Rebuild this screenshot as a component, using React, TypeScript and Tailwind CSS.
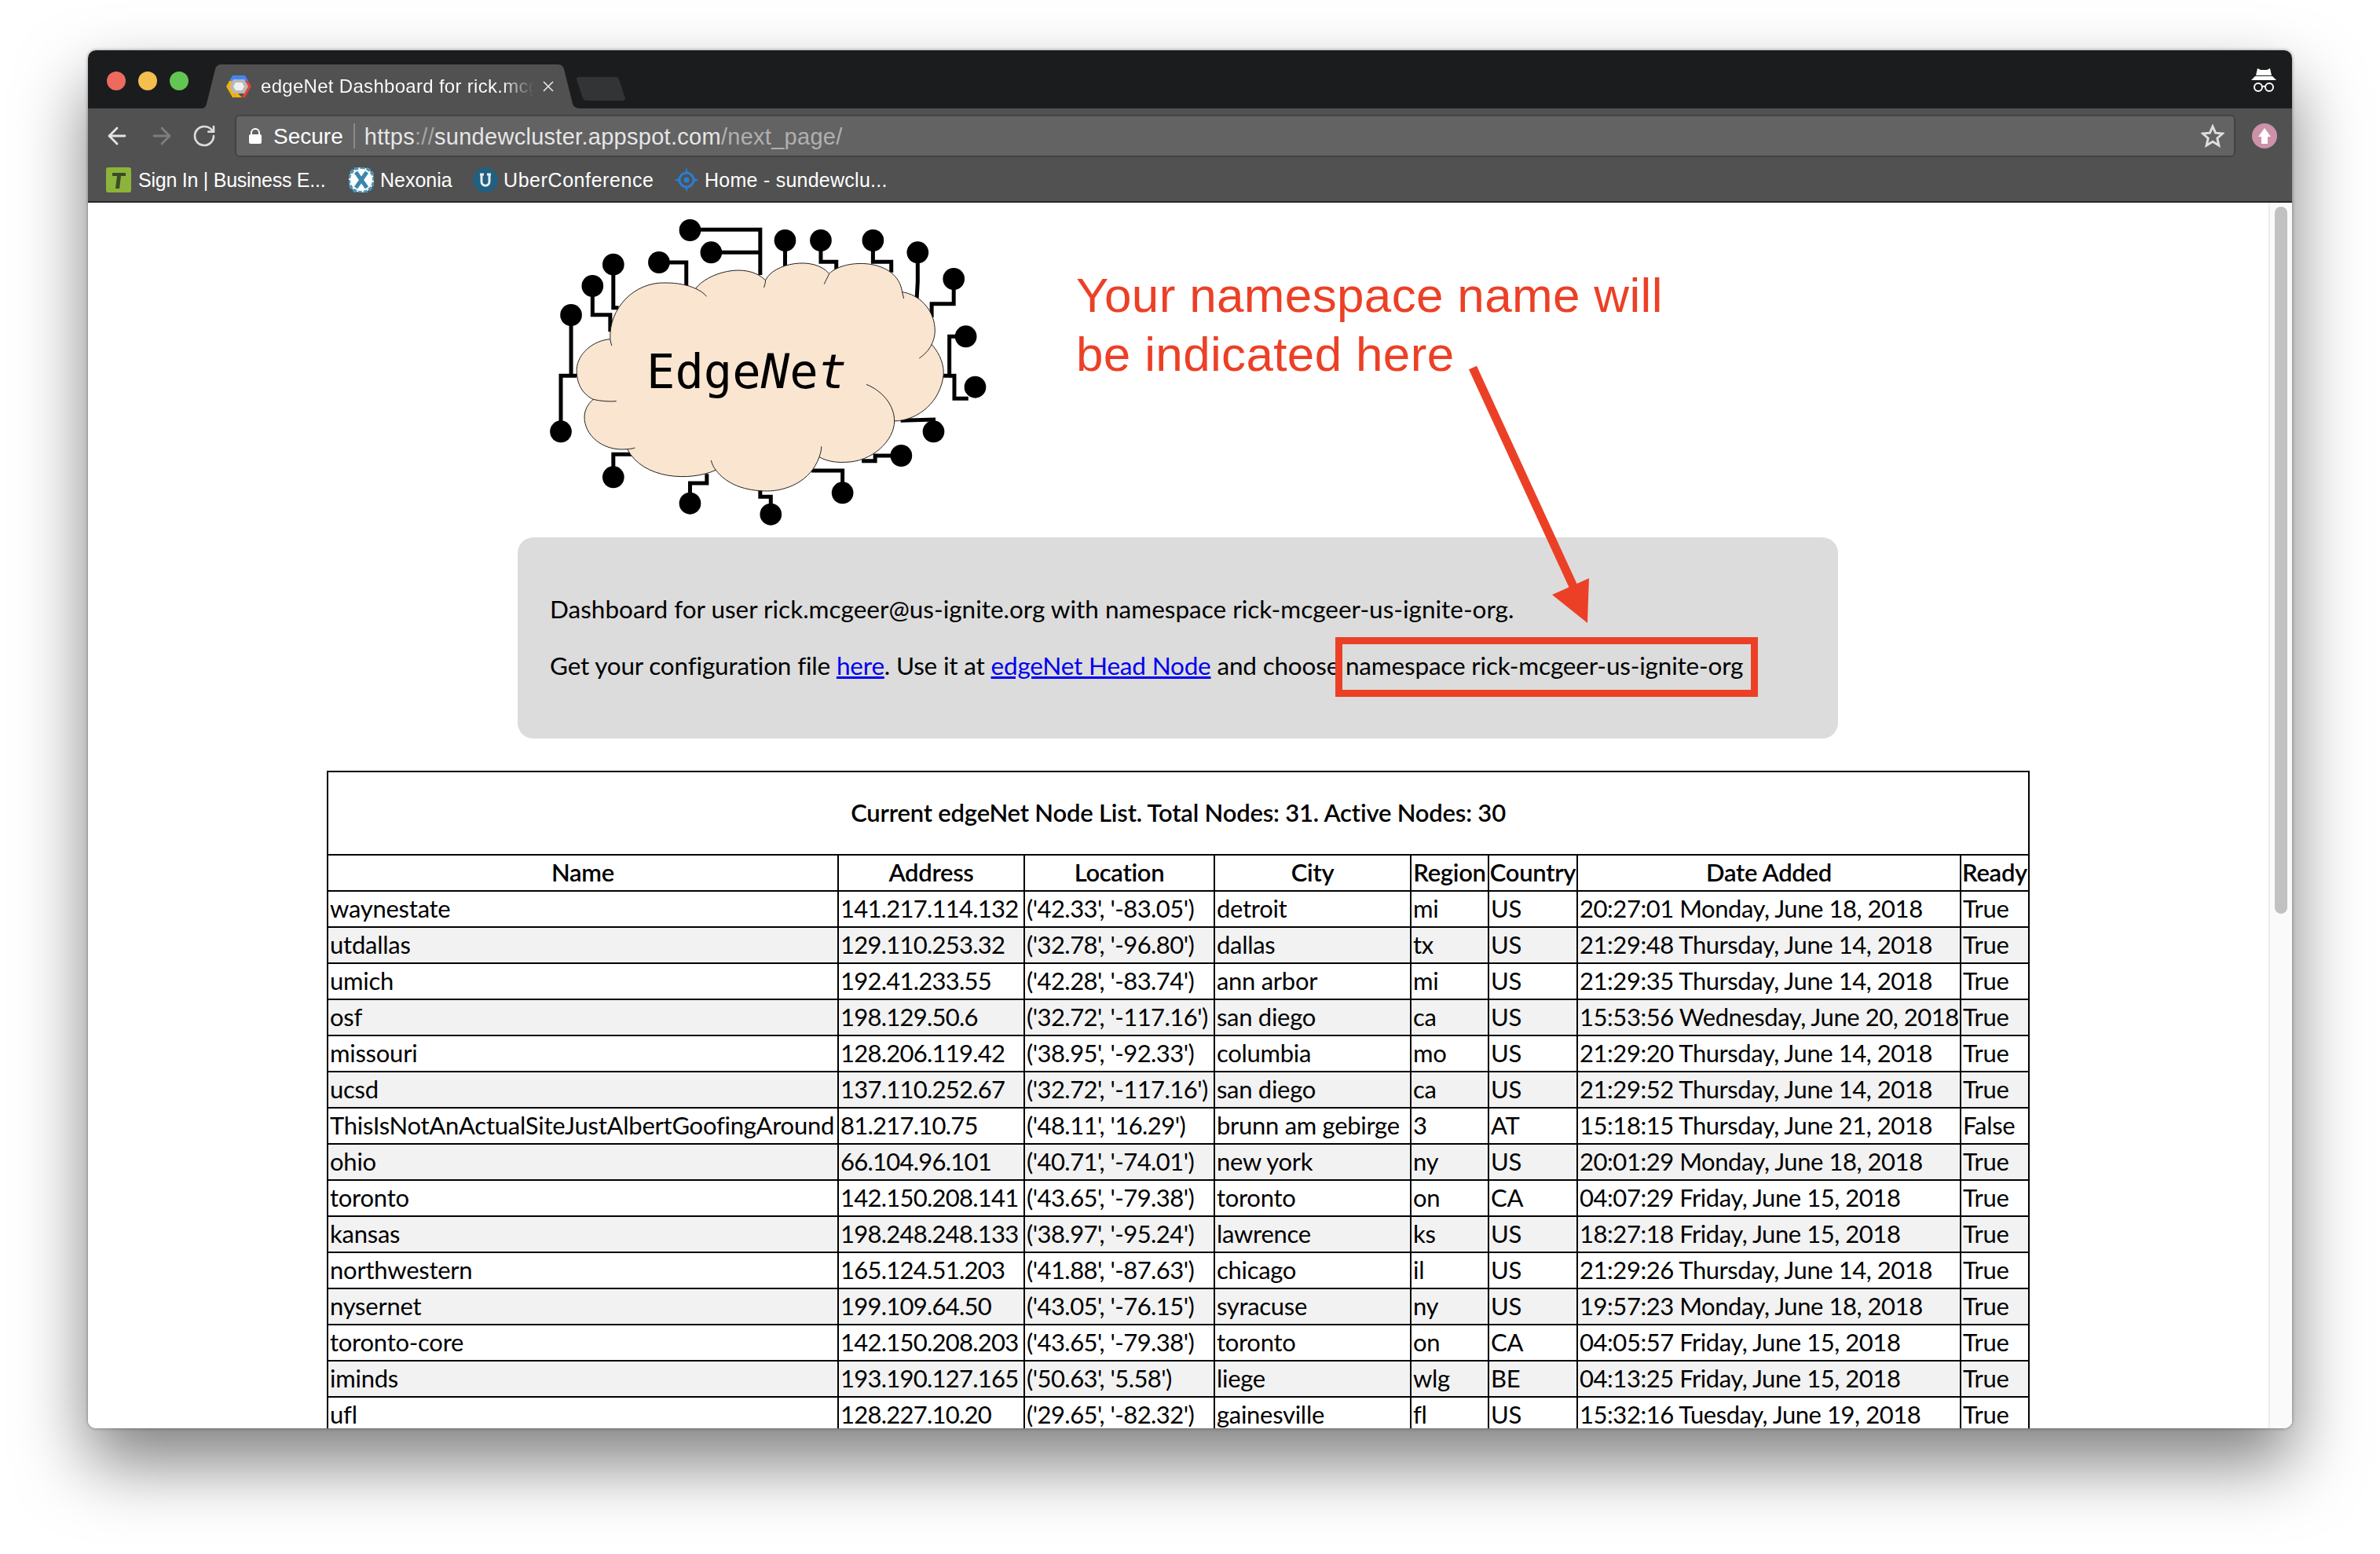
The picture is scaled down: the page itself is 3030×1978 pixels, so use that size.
import { ArrowLeft, ArrowRight, RotateCw } from "lucide-react";

const rows = [
  ["waynestate", "141.217.114.132", "('42.33', '-83.05')", "detroit", "mi", "US", "20:27:01 Monday, June 18, 2018", "True"],
  ["utdallas", "129.110.253.32", "('32.78', '-96.80')", "dallas", "tx", "US", "21:29:48 Thursday, June 14, 2018", "True"],
  ["umich", "192.41.233.55", "('42.28', '-83.74')", "ann arbor", "mi", "US", "21:29:35 Thursday, June 14, 2018", "True"],
  ["osf", "198.129.50.6", "('32.72', '-117.16')", "san diego", "ca", "US", "15:53:56 Wednesday, June 20, 2018", "True"],
  ["missouri", "128.206.119.42", "('38.95', '-92.33')", "columbia", "mo", "US", "21:29:20 Thursday, June 14, 2018", "True"],
  ["ucsd", "137.110.252.67", "('32.72', '-117.16')", "san diego", "ca", "US", "21:29:52 Thursday, June 14, 2018", "True"],
  ["ThisIsNotAnActualSiteJustAlbertGoofingAround", "81.217.10.75", "('48.11', '16.29')", "brunn am gebirge", "3", "AT", "15:18:15 Thursday, June 21, 2018", "False"],
  ["ohio", "66.104.96.101", "('40.71', '-74.01')", "new york", "ny", "US", "20:01:29 Monday, June 18, 2018", "True"],
  ["toronto", "142.150.208.141", "('43.65', '-79.38')", "toronto", "on", "CA", "04:07:29 Friday, June 15, 2018", "True"],
  ["kansas", "198.248.248.133", "('38.97', '-95.24')", "lawrence", "ks", "US", "18:27:18 Friday, June 15, 2018", "True"],
  ["northwestern", "165.124.51.203", "('41.88', '-87.63')", "chicago", "il", "US", "21:29:26 Thursday, June 14, 2018", "True"],
  ["nysernet", "199.109.64.50", "('43.05', '-76.15')", "syracuse", "ny", "US", "19:57:23 Monday, June 18, 2018", "True"],
  ["toronto-core", "142.150.208.203", "('43.65', '-79.38')", "toronto", "on", "CA", "04:05:57 Friday, June 15, 2018", "True"],
  ["iminds", "193.190.127.165", "('50.63', '5.58')", "liege", "wlg", "BE", "04:13:25 Friday, June 15, 2018", "True"],
  ["ufl", "128.227.10.20", "('29.65', '-82.32')", "gainesville", "fl", "US", "15:32:16 Tuesday, June 19, 2018", "True"],
];

const headers = ["Name", "Address", "Location", "City", "Region", "Country", "Date Added", "Ready"];

const nodes = [
  [502, 99], [570, 184], [808, 138], [923, 138], [1091, 138], [1235, 184], [1351, 285], [1390, 505], [1420, 698], [1286, 868],
  [1182, 960], [993, 1102], [762, 1184], [502, 1142], [255, 1042], [86, 868], [119, 423], [188, 312], [255, 230], [402, 222],
];

const wires = [
  "502,97 728,97 728,270",
  "570,184 728,184",
  "808,138 808,240 865,240",
  "923,138 923,220 973,220 973,265",
  "1091,138 1091,220 1150,220 1150,260",
  "1235,184 1235,295 1232,360",
  "1351,285 1351,380 1280,380 1280,432",
  "1390,505 1337,505 1337,655 1318,655",
  "1337,655 1353,655 1353,742 1398,742",
  "1286,868 1286,822 1180,826",
  "1182,960 1098,960 1098,980 1055,980",
  "993,1102 993,1017 893,1017",
  "762,1184 762,1117 728,1117 728,1090",
  "502,1142 502,1065 556,1065 556,1030",
  "255,1042 255,955 325,955",
  "86,868 86,655 137,655",
  "119,423 119,655",
  "188,312 188,422 245,422 245,487",
  "255,230 255,395 272,395",
  "402,222 490,222 490,320",
];

const Logo = () => (
  <div className="relative ml-[568px] mt-[2px] h-[424px] w-[620px]">
    <svg viewBox="0 0 1568 1272" preserveAspectRatio="none" className="h-full w-full">
      {wires.map((w) => (
        <polyline key={w} points={w} fill="none" stroke="#000" strokeWidth={5} vectorEffect="non-scaling-stroke" />
      ))}
      {nodes.map(([cx, cy]) => (
        <ellipse key={`${cx}-${cy}`} cx={cx} cy={cy} rx={35} ry={42} fill="#000" />
      ))}
      <path
        d="M245 515 C240 400 320 295 425 300 C460 300 495 308 520 322 C555 265 680 215 745 290 C770 225 900 195 950 265 C1000 205 1170 205 1185 335 C1240 345 1285 400 1290 470 C1292 495 1288 515 1280 535 C1310 575 1320 620 1318 650 C1310 750 1240 825 1160 828 C1160 900 1090 985 1000 985 C970 987 940 980 918 965 C890 1060 810 1095 750 1095 C680 1095 620 1070 585 1015 C500 1060 350 1050 300 935 C220 945 160 880 162 810 C163 785 172 765 190 745 C150 720 137 680 137 630 C140 570 190 520 245 515 Z"
        fill="#fae5d1"
        stroke="#222"
        strokeWidth={1}
        vectorEffect="non-scaling-stroke"
      />
      <path
        d="M520 322 C535 330 548 340 555 352 M745 290 C745 300 742 310 740 318 M950 265 C945 280 938 292 934 305 M1185 335 C1187 345 1189 352 1190 360 M1280 535 C1270 560 1255 575 1240 588 M1070 688 C1125 715 1160 770 1160 828 M918 965 C922 950 925 940 925 925 M585 1015 C578 1005 572 990 570 978 M300 935 C310 935 318 932 325 930 M190 745 C215 752 240 754 265 752 M245 515 C246 525 248 532 250 540"
        fill="none"
        stroke="#222"
        strokeWidth={1}
        vectorEffect="non-scaling-stroke"
      />
    </svg>
    <div className="absolute left-[143px] top-[178px] font-['DejaVu_Sans_Mono',monospace] text-[60.5px] leading-[70px] text-black">
      Edge<span className="italic">N</span>e<span className="italic">t</span>
    </div>
  </div>
);

const Favicon = () => (
  <svg viewBox="0 0 32 28" className="h-[28px] w-[32px]">
    <path d="M8 0H24L28 7H4Z" fill="#4285f4" />
    <path d="M28 7L32 14L24 28H20L26 14L24 8Z" fill="#db4437" />
    <path d="M0 14L4 7H8L6 14L12 28H8Z" fill="#f4b400" />
    <path d="M6 14L12 28H20L14 22Z" fill="#f4b400" />
    <path d="M9 5H23L28 14L23 23H9L4 14Z" fill="#b8b8b8" />
    <path d="M12 9H20L23 14L20 19H12L9 14Z" fill="#f0f0f0" />
  </svg>
);

const Incognito = () => (
  <svg viewBox="0 0 32 30" className="h-[30px] w-[32px]">
    <path d="M8 0L12 2H20L24 0L26 9H6Z" fill="#fff" />
    <path d="M0 15L5 10H27L32 15Z" fill="#fff" />
    <circle cx="9" cy="24" r="5" fill="none" stroke="#fff" strokeWidth="2" />
    <circle cx="23" cy="24" r="5" fill="none" stroke="#fff" strokeWidth="2" />
    <path d="M13 23H19" stroke="#fff" strokeWidth="2" />
  </svg>
);

const Toolbar = () => (
  <div className="flex h-[120px] flex-col border-b-2 border-[#262626] bg-[#515151] font-['Liberation_Sans',sans-serif]">
    <div className="flex h-[62px] items-center pt-[8px]">
      <ArrowLeft size={34} strokeWidth={2} color="#e4e4e4" className="ml-[20px]" />
      <ArrowRight size={34} strokeWidth={2} color="#7e7e7e" className="ml-[23px]" />
      <RotateCw size={32} strokeWidth={2} color="#dcdcdc" className="ml-[21px]" />
      <div className="ml-[23px] flex h-[54px] w-[2547px] items-center rounded-[6px] border-2 border-[#434343] bg-[#636363]">
        <svg viewBox="0 0 16 20" className="ml-[16px] h-[20px] w-[16px]">
          <path d="M3 9V6a5 5 0 0 1 10 0v3" fill="none" stroke="#fff" strokeWidth="2" />
          <rect x="0" y="8" width="16" height="12" rx="2" fill="#fff" />
        </svg>
        <span className="ml-[15px] pt-[2px] text-[28px] leading-[34px] text-white">Secure</span>
        <span className="ml-[13px] h-[32px] w-[2px] bg-[#8a8a8a]" />
        <span className="ml-[12px] pt-[2px] text-[29px] leading-[34px] tracking-[0.28px] text-[#e6e6e6]">
          https<span className="text-[#a6a6a6]">://</span>sundewcluster.appspot.com<span className="text-[#b0b0b0]">/next_page/</span>
        </span>
        <svg viewBox="0 0 30 30" className="ml-auto mr-[12px] h-[30px] w-[30px]">
          <path d="M15 3L18.6 11.2 27.5 12 20.8 18 22.8 27 15 22.3 7.2 27 9.2 18 2.5 12 11.4 11.2Z" fill="none" stroke="#dedede" strokeWidth="3" />
        </svg>
      </div>
      <div className="ml-[21px] flex h-[32px] w-[32px] items-center justify-center rounded-full bg-[#cc92aa]">
        <svg viewBox="0 0 16 20" className="h-[20px] w-[16px]">
          <path d="M8 0L16 11H12V20H4V11H0Z" fill="#fff" />
        </svg>
      </div>
    </div>
    <div className="flex flex-1 items-center pl-[23px] pt-[2px] text-[25px] leading-[30px] text-white">
      <svg viewBox="0 0 32 32" className="h-[32px] w-[32px]">
        <rect width="32" height="32" rx="3" fill="#8cb43a" />
        <path d="M8 7H25V11H19L17 27H12L14 11H8Z" fill="#3b4a2a" />
      </svg>
      <span className="ml-[9px] w-[240px] tracking-[-0.25px]">Sign In | Business E...</span>
      <svg viewBox="0 0 32 32" className="ml-[28px] h-[32px] w-[32px]">
        <circle cx="16" cy="16" r="16" fill="#fff" />
        <path d="M16 0A16 16 0 0 1 32 16A16 16 0 0 1 16 32A16 16 0 0 1 0 16A16 16 0 0 1 16 0Z" fill="none" stroke="#4d95b8" strokeWidth="4" strokeDasharray="5 2" />
        <path d="M9 6L23 26M23 6L9 26" stroke="#3a87ad" strokeWidth="5" />
      </svg>
      <span className="ml-[8px] w-[92px]">Nexonia</span>
      <svg viewBox="0 0 32 32" className="ml-[26px] h-[32px] w-[32px]">
        <circle cx="16" cy="16" r="16" fill="#22607f" />
        <path d="M9 9H14M18 9H23M11 9V18C11 25 21 25 21 18V9" fill="none" stroke="#e8eef2" strokeWidth="3" />
      </svg>
      <span className="ml-[7px] w-[192px] tracking-[0.58px]">UberConference</span>
      <svg viewBox="0 0 32 32" className="ml-[25px] h-[32px] w-[32px]">
        <path d="M16 0L18 7H14ZM0 16L6 14V18ZM32 16L26 14V18ZM16 32L14 25H18Z" fill="#2a7ed2" />
        <circle cx="16" cy="16" r="9" fill="none" stroke="#2a7ed2" strokeWidth="3" />
        <circle cx="16" cy="16" r="3.5" fill="#2a7ed2" />
      </svg>
      <span className="ml-[7px] tracking-[0.25px]">Home - sundewclu...</span>
    </div>
  </div>
);

const TitleBar = () => (
  <div className="flex h-[74px] items-start bg-[#1b1c1e] font-['Liberation_Sans',sans-serif]">
    <div className="ml-[24px] mt-[27px] flex gap-[16px]">
      <span className="h-[24px] w-[24px] rounded-full bg-[#ee6a5f]" />
      <span className="h-[24px] w-[24px] rounded-full bg-[#f5bf4f]" />
      <span className="h-[24px] w-[24px] rounded-full bg-[#62c554]" />
    </div>
    <div className="relative ml-[16px] mt-[18px] h-[56px] w-[484px]">
      <svg viewBox="0 0 484 56" className="absolute inset-0 h-full w-full">
        <path d="M0 56C4 56 6 54 7 50L18 6C19 2 22 0 26 0H454C458 0 461 2 462 6L473 50C474 54 478 56 484 56Z" fill="#515151" />
      </svg>
      <div className="relative flex h-[42px] items-center pl-[32px] pt-[14px]">
        <Favicon />
        <span className="ml-[12px] w-[348px] overflow-hidden whitespace-nowrap bg-[linear-gradient(90deg,#fff_88%,transparent_100%)] bg-clip-text text-[24px] leading-[30px] tracking-[0.3px] text-transparent">
          edgeNet Dashboard for rick.mcgeer@us-ignite.org
        </span>
        <svg viewBox="0 0 14 14" className="ml-[11px] h-[14px] w-[14px]">
          <path d="M1 1L13 13M13 1L1 13" stroke="#e8e8e8" strokeWidth="1.6" />
        </svg>
      </div>
    </div>
    <svg viewBox="0 0 63 30" className="ml-[-6px] mt-[34px] h-[30px] w-[63px]">
      <path d="M2 0H50C52 0 53 1 54 3L62 27C62 29 61 30 59 30H12C10 30 9 29 8 27L0 3C0 1 1 0 2 0Z" fill="#333436" />
    </svg>
    <div className="ml-auto mr-[20px] mt-[23px]">
      <Incognito />
    </div>
  </div>
);

const Annotations = () => (
  <>
    <div className="absolute left-[1258px] top-[80px] font-['Liberation_Sans',sans-serif] text-[62px] leading-[75px] tracking-[0.34px] text-[#ec4026]">
      Your namespace name will
      <br />
      be indicated here
    </div>
    <svg viewBox="0 0 200 360" className="absolute left-[1752px] top-[204px] h-[360px] w-[200px]">
      <path d="M11 6L143 293" stroke="#ec4026" strokeWidth="11" fill="none" />
      <path d="M159 274L112 295 157 331Z" fill="#ec4026" />
    </svg>
    <div className="absolute left-[1588px] top-[553px] h-[76px] w-[538px] border-[9px] border-[#ec4026]" />
  </>
);

const columnTracking = [
  "tracking-[-0.25px]",
  "tracking-[-0.75px]",
  "tracking-[-0.55px]",
  "tracking-[-0.3px]",
  "tracking-[-0.3px]",
  "tracking-[-0.3px]",
  "tracking-[-0.45px]",
  "tracking-[-0.3px]",
];

const NodeTable = () => (
  <table className="ml-[304px] mt-[41px] w-[2166px] table-fixed border-collapse border-2 border-black text-[31px] leading-[38px] text-black">
    <colgroup>
      <col className="w-[650px]" />
      <col className="w-[237px]" />
      <col className="w-[242px]" />
      <col className="w-[250px]" />
      <col className="w-[99px]" />
      <col className="w-[113px]" />
      <col className="w-[488px]" />
      <col className="w-[87px]" />
    </colgroup>
    <thead>
      <tr>
        <th colSpan={8} className="h-[106px] border-2 border-black px-[2px] pb-[2px] text-center font-semibold tracking-[-0.2px]">
          Current edgeNet Node List. Total Nodes: 31. Active Nodes: 30
        </th>
      </tr>
      <tr>
        {headers.map((h) => (
          <th key={h} className="h-[46px] border-2 border-black p-0 pb-[2px] text-center font-semibold tracking-[-0.3px] whitespace-nowrap">
            {h}
          </th>
        ))}
      </tr>
    </thead>
    <tbody>
      {rows.map((row, i) => (
        <tr key={row[0]} className={i % 2 === 1 ? "bg-[#f2f2f2]" : "bg-white"}>
          {row.map((cell, j) => (
            <td key={j} className={`h-[46px] border-2 border-black pb-[2px] pl-[2px] pr-0 pt-0 whitespace-nowrap ${columnTracking[j]}`}>
              {cell}
            </td>
          ))}
        </tr>
      ))}
    </tbody>
  </table>
);

const App = () => {
  return (
    <div className="h-[1978px] w-[3030px] overflow-hidden bg-white pl-[112px] pt-[64px]">
      <div className="flex h-[1754px] w-[2806px] flex-col overflow-hidden rounded-[10px] shadow-[0_44px_88px_rgba(0,0,0,0.5),0_0_4px_rgba(0,0,0,0.4)]">
        <TitleBar />
        <Toolbar />
        <div className="flex min-h-0 flex-1 bg-white font-[Lato,sans-serif]">
          <div className="relative w-[2776px] overflow-hidden">
            <Logo />
            <div className="ml-[547px] h-[256px] w-[1681px] rounded-[20px] bg-[#dcdcdc] pl-[41px] pt-[71px] text-[31.5px] leading-[40px] text-black">
              <p>Dashboard for user rick.mcgeer@us-ignite.org with namespace rick-mcgeer-us-ignite-org.</p>
              <p className="mt-[32px] tracking-[-0.19px]">
                Get your configuration file <a href="#" className="text-[#0000ee] underline">here</a>. Use it at{" "}
                <a href="#" className="text-[#0000ee] underline">edgeNet Head Node</a> and choose namespace rick-mcgeer-us-ignite-org
              </p>
            </div>
            <NodeTable />
            <Annotations />
          </div>
          <div className="w-[30px] border-l-2 border-[#ededed] bg-[#fafafa] pl-[6px] pt-[5px]">
            <div className="h-[900px] w-[16px] rounded-full bg-[#c1c1c1]" />
          </div>
        </div>
      </div>
    </div>
  );
};

export default App;
